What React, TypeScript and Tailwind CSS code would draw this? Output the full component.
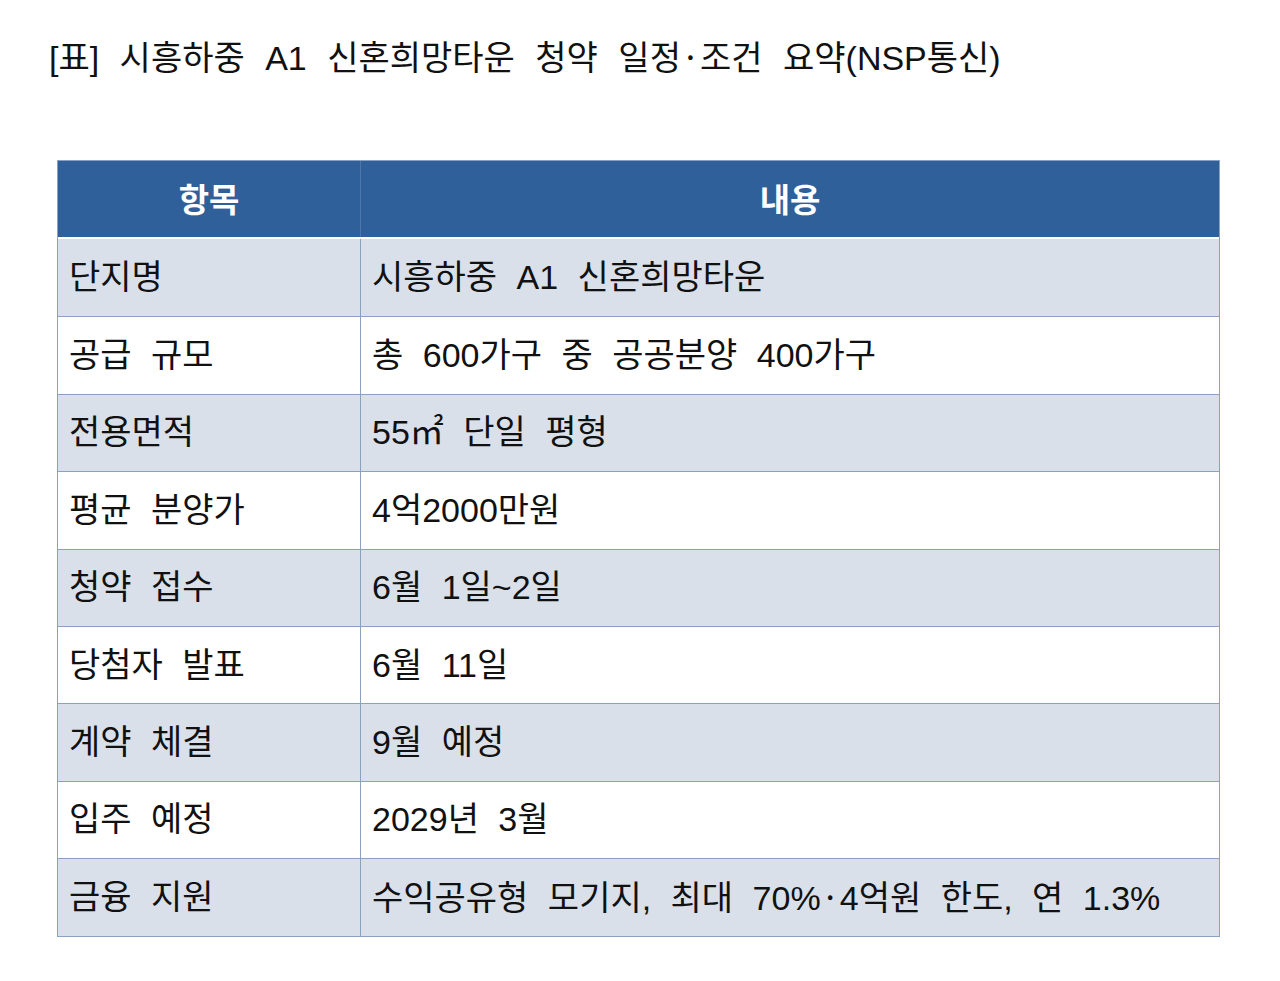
const rows: [string, string][] = [
  ["단지명", "시흥하중 A1 신혼희망타운"],
  ["공급 규모", "총 600가구 중 공공분양 400가구"],
  ["전용면적", "55㎡ 단일 평형"],
  ["평균 분양가", "4억2000만원"],
  ["청약 접수", "6월 1일~2일"],
  ["당첨자 발표", "6월 11일"],
  ["계약 체결", "9월 예정"],
  ["입주 예정", "2029년 3월"],
  ["금융 지원", "수익공유형 모기지, 최대 70%·4억원 한도, 연 1.3%"],
];

// the middle dot is set in the Korean font so it keeps its wide spacing
function Text({ value }: { value: string }) {
  const parts = value.split("·");
  return (
    <>
      {parts.map((p, i) => (
        <span key={i}>
          {i > 0 && <span className="font-['Noto_Sans_CJK_KR',sans-serif]">·</span>}
          {p}
        </span>
      ))}
    </>
  );
}

export default function App() {
  return (
    <div className="min-h-[981px] w-[1280px] bg-white text-[#111] font-['Liberation_Sans','Noto_Sans_CJK_KR',sans-serif] [word-spacing:10px]">
      <h1 className="h-[81px] overflow-hidden pl-[49px] pt-[31px] text-[34px] leading-[50px] font-normal [word-spacing:11px]">
        <Text value="[표] 시흥하중 A1 신혼희망타운 청약 일정·조건 요약(NSP통신)" />
      </h1>

      <div className="ml-[57px] mt-[79px] w-[1163px] border border-[#8aa2c2]">
        <div className="grid h-[76px] grid-cols-[303px_1fr] bg-[#30609a] text-[33px] font-bold text-white">
          <div className="flex items-center justify-center border-r border-[#4a76ab] pt-[4px]">항목</div>
          <div className="flex items-center justify-center pt-[4px]">내용</div>
        </div>
        <div className="h-[2px] bg-white" />
        {rows.map(([k, v], i) => (
          <div
            key={k}
            className={`grid h-[77.4px] grid-cols-[303px_1fr] text-[34px] ${
              i % 2 === 0 ? "bg-[#d9e0ea]" : "bg-white"
            } ${i > 0 ? "border-t border-[#8aa2c2]" : ""}`}
          >
            <div className="flex items-center border-r border-[#8aa2c2] pl-[11px]">{k}</div>
            <div className="flex items-center pl-[11px]">
              <span>
                <Text value={v} />
              </span>
            </div>
          </div>
        ))}
      </div>
    </div>
  );
}
